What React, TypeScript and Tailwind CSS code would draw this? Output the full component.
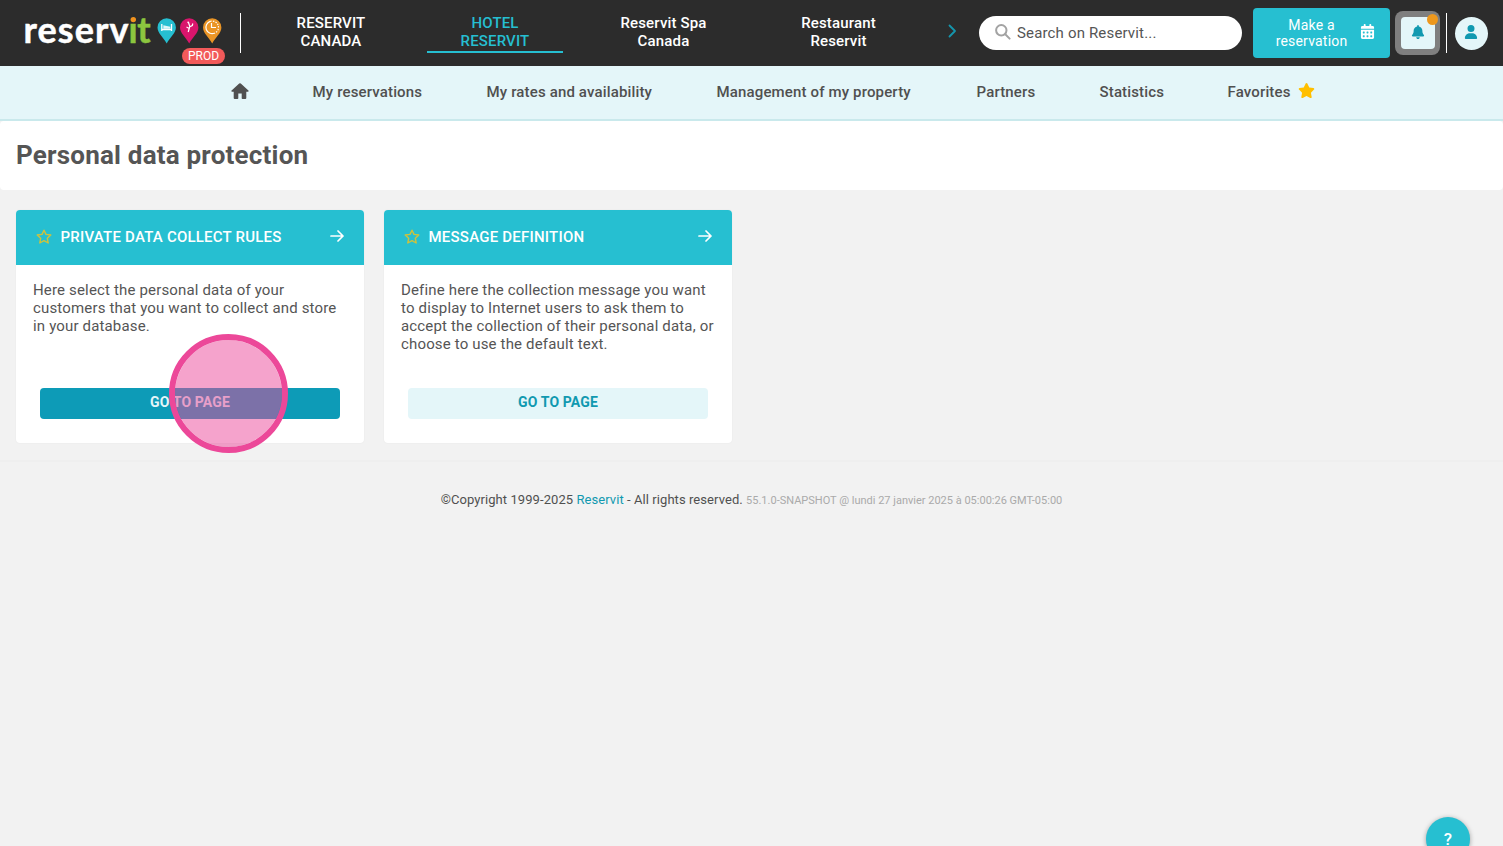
import { FaBell, FaCalendarDays, FaStar, FaUser } from 'react-icons/fa6';
import clsx from 'clsx';

type CardProps = {
  title: string;
  lines: string[];
  active?: boolean;
};

const tabs = [
  { lines: ['RESERVIT', 'CANADA'], width: 'w-[136px]' },
  { lines: ['HOTEL', 'RESERVIT'], width: 'w-[136px]', active: true },
  { lines: ['Reservit Spa', 'Canada'], width: 'w-[145px]' },
  { lines: ['Restaurant', 'Reservit'], width: 'w-[149px]' },
];

const menu = [
  { label: 'My reservations', width: 'w-[110px]' },
  { label: 'My rates and availability', width: 'w-[166px]' },
  { label: 'Management of my property', width: 'w-[196px]' },
  { label: 'Partners', width: 'w-[59px]' },
  { label: 'Statistics', width: 'w-[64px]' },
];

const cards: CardProps[] = [
  {
    title: 'PRIVATE DATA COLLECT RULES',
    lines: ['Here select the personal data of your', 'customers that you want to collect and store', 'in your database.'],
    active: true,
  },
  {
    title: 'MESSAGE DEFINITION',
    lines: [
      'Define here the collection message you want',
      'to display to Internet users to ask them to',
      'accept the collection of their personal data, or',
      'choose to use the default text.',
    ],
  },
];

function Logo() {
  return (
    <svg className="block h-[66px] w-[240px]" viewBox="0 0 240 66">
      <text x="23.500" y="42.800" fontFamily="Lato, sans-serif" fontWeight="700" fontSize="36" fill="#fff" stroke="#fff" strokeWidth="0.500" textLength="105" lengthAdjust="spacing">
        reserv
      </text>
      <text y="42.800" fontFamily="Lato, sans-serif" fontWeight="700" fontSize="36" fill="#8cc63f" stroke="#8cc63f" strokeWidth="0.500">
        <tspan x="128.500">i</tspan>
        <tspan x="137.300">t</tspan>
      </text>
      <circle cx="133.300" cy="19" r="4" fill="#2c2c2c" />
      <circle cx="133.300" cy="19.600" r="2.700" fill="#f0921e" />
      {/* Map pins */}
      <path d="M166.700 43.500C163.500 37.500 157.500 33 157.500 27.500a9.200 9.200 0 0 1 18.400 0C175.900 33 169.900 37.500 166.700 43.500z" fill="#26bfd1" />
      <path d="M189.200 43.500C186 37.500 180 33 180 27.500a9.200 9.200 0 0 1 18.400 0C198.400 33 192.400 37.500 189.200 43.500z" fill="#d9156c" />
      <path d="M212.200 43.500C209 37.500 203 33 203 27.500a9.200 9.200 0 0 1 18.400 0C221.400 33 215.400 37.500 212.200 43.500z" fill="#ea9526" />
      <path d="M161.800 24v7M161.800 29.500h9.700M171.500 24v7" stroke="#fff" strokeWidth="1.300" fill="none" />
      <path d="M163.300 25.200l7 1.500v2h-7z" fill="#fff" opacity="0.850" />
      <path d="M188.500 22.500l1.300 4-1.600 5.500M189.800 26.800l2.500-1.300.5-2M188.800 28.200l-2.300-1.200" stroke="#fff" strokeWidth="1.200" fill="none" />
      <circle cx="188.200" cy="22.300" r="0.900" fill="#fff" />
      <circle cx="212.200" cy="27.300" r="6.300" stroke="#fff" strokeWidth="1.200" strokeDasharray="21 1.200 1.400 1.200 1.400 1.200 1.400 1.200 1.400 1.200 1.400 1.200 1.400 1.200" transform="rotate(70 212.200 27.300)" fill="none" />
      <path d="M211.500 23v4.500h4.500" stroke="#fff" strokeWidth="1.200" fill="none" />
    </svg>
  );
}

function Header() {
  return (
    <header className="flex h-[66px] bg-[#2c2c2c]">
      <div className="relative w-[240px] shrink-0">
        <Logo />
        <span className="absolute left-[182px] top-[48px] flex h-4 w-[43px] items-center justify-center rounded-full bg-[#f25a5a] text-[12px] leading-4 text-white">
          PROD
        </span>
      </div>
      <div className="mt-[13px] h-10 w-px bg-white" />
      <nav className="ml-[22px] flex gap-7 pt-[14px]">
        {tabs.map((tab) => (
          <div
            key={tab.lines.join(' ')}
            className={clsx(
              'h-[39px] border-b-2 text-center text-[15px] font-medium leading-[18px] tracking-[0.150px]',
              tab.width,
              tab.active ? 'border-[#26bfd1] text-[#26bfd1]' : 'border-transparent text-white'
            )}
          >
            {tab.lines.map((line) => (
              <div key={line}>{line}</div>
            ))}
          </div>
        ))}
      </nav>
      <svg className="ml-[35px] mt-[24px] h-[14px] w-[9px] shrink-0" viewBox="0 0 9 14" fill="none" stroke="#1596ad" strokeWidth="1.800">
        <path d="M1.500 1.500L7 7l-5.500 5.500" strokeLinecap="round" strokeLinejoin="round" />
      </svg>
      <div className="ml-[22px] mt-4 flex h-[34px] w-[263px] shrink-0 items-center rounded-full bg-white pl-4">
        <svg className="mb-[3px] h-4 w-4" viewBox="0 0 16 16" fill="none" stroke="#a3a3a3" strokeWidth="2">
          <circle cx="6.300" cy="6.300" r="5.200" />
          <path d="M10.300 10.300l4.300 4.300" strokeLinecap="round" />
        </svg>
        <span className="ml-[6px] text-[15px] tracking-[0.160px] text-[#555]">Search on Reservit...</span>
      </div>
      <button className="ml-[11px] mt-2 flex h-[50px] w-[137px] shrink-0 items-center rounded-[4px] bg-[#26bfd1] pl-[22px] text-white">
        <span className="mb-px w-[73px] text-center text-[14px] leading-4 tracking-[0.200px]">
          Make a<br />reservation
        </span>
        <FaCalendarDays className="mb-[3px] ml-3 h-[15px] w-[15px]" />
      </button>
      <div className="relative ml-[5px] mt-[11px] flex h-[44px] w-[45px] shrink-0 items-center justify-center rounded-[8px] bg-[#7f7f7f]">
        <div className="flex h-8 w-[34px] items-center justify-center rounded-[4px] bg-[#e4f6f9]">
          <FaBell className="mb-[3px] h-[14px] w-[14px] text-[#1199b0]" />
        </div>
        <span className="absolute left-[32px] top-[3px] h-[11px] w-[11px] rounded-full bg-[#ed981d]" />
      </div>
      <div className="ml-[6px] mt-[13px] h-10 w-px shrink-0 bg-white" />
      <div className="ml-2 mt-[17px] flex h-[33px] w-[33px] shrink-0 items-center justify-center rounded-full bg-[#e4f6f9]">
        <FaUser className="mb-[4px] mr-px h-[14px] w-[14px] text-[#1199b0]" />
      </div>
    </header>
  );
}

function MainMenu() {
  return (
    <nav className="flex h-[55px] items-center gap-16 border-b-2 border-[#c9e9ec] bg-[#e4f6f9] pl-[230.500px] text-[15px] font-medium tracking-[0.150px] text-[#505050]">
      <svg className="mb-[3px] h-4 w-[18px] shrink-0" viewBox="0 0 18 16" fill="#505050">
        <path d="M8.200.5a1.200 1.200 0 0 1 1.600 0l7.600 7c.6.600.200 1.300-.5 1.300h-1.600V15a1 1 0 0 1-1 1h-2.800a.8.800 0 0 1-.8-.8V10.500H7.300v4.700a.8.800 0 0 1-.8.800H3.700a1 1 0 0 1-1-1V8.800H1.100c-.7 0-1.100-.7-.5-1.300z" />
      </svg>
      {menu.map((item) => (
        <span key={item.label} className={clsx('shrink-0 whitespace-nowrap', item.width)}>
          {item.label}
        </span>
      ))}
      <span className="flex items-center">
        Favorites
        <FaStar className="mb-[4px] ml-[7px] h-[17px] w-[17px] text-[#ffbf00]" />
      </span>
    </nav>
  );
}

function Card({ title, lines, active }: CardProps) {
  return (
    <section className="relative h-[233px] w-[348px] rounded-[4px] bg-white shadow-[0_0_2px_rgba(0,0,0,0.060)]">
      <div className="flex h-[55px] items-center rounded-t-[4px] bg-[#26bfd1] px-5 text-white">
        <svg className="mb-[3px] h-[15px] w-4" viewBox="0 0 16 15" fill="none" stroke="#cfc23c" strokeWidth="1.400" strokeLinejoin="round">
          <path d="M8 1.200l2 4.200 4.800.6-3.500 3.200.9 4.800L8 11.700 3.800 14l.9-4.800L1.200 6 6 5.400z" />
        </svg>
        <h2 className="ml-2 whitespace-nowrap pl-[0.500px] text-[15px] font-medium tracking-[0.220px]">{title}</h2>
        <svg className="mb-[4px] ml-auto h-3 w-[14px]" viewBox="0 0 14 12" fill="none" stroke="currentColor" strokeWidth="1.700" strokeLinecap="round" strokeLinejoin="round">
          <path d="M1 6h12M8 1l5 5-5 5" />
        </svg>
      </div>
      <div className="h-[123px] whitespace-nowrap px-[17px] pt-4 text-[15px] leading-[18px] tracking-[0.160px] text-[#555]">
        {lines.map((line) => (
          <div key={line}>{line}</div>
        ))}
      </div>
      <button
        className={clsx(
          'mx-6 block h-[31px] w-[300px] rounded-[4px] pb-[3px] text-[14px] font-bold leading-7 tracking-[0.150px]',
          active ? 'bg-[#0d9bb7] text-[#e4f6f9]' : 'bg-[#e4f6f9] text-[#1199b0]'
        )}
      >
        GO TO PAGE
      </button>
      {/* Click marker over the button */}
      {active && (
        <div className="absolute left-[153px] top-[124px] h-[119px] w-[119px] rounded-full border-[6px] border-[#ec4899] bg-[#ec4899]/50 bg-clip-padding" />
      )}
    </section>
  );
}

export default function App() {
  return (
    <div className="relative h-[846px] w-[1503px] overflow-hidden bg-[#f2f2f2] font-['Roboto',sans-serif]">
      <Header />
      <MainMenu />
      <div className="flex h-[69px] items-center rounded-[4px] bg-white pl-4">
        <h1 className="text-[26px] font-bold tracking-[0.200px] text-[#555]">Personal data protection</h1>
      </div>
      <main className="flex gap-5 px-4 pt-5">
        {cards.map((card) => (
          <Card key={card.title} {...card} />
        ))}
      </main>
      <footer className="mt-[17px] whitespace-nowrap border-t-2 border-[#efefef] pt-[28px] text-center text-[13px] leading-5 tracking-[0.070px] text-[#505050]">
        ©Copyright 1999-2025 <span className="text-[#1199b0]">Reservit</span> - All rights reserved.{' '}
        <span className="text-[11px] tracking-normal text-[#aaa]">55.1.0-SNAPSHOT @ lundi 27 janvier 2025 à 05:00:26 GMT-05:00</span>
      </footer>
      <button className="absolute left-[1426px] top-[817px] h-11 w-11 rounded-full bg-[#26bfd1] text-[17px] font-medium leading-[42px] text-white shadow-[0_1px_5px_rgba(0,0,0,0.350)]">
        ?
      </button>
    </div>
  );
}
